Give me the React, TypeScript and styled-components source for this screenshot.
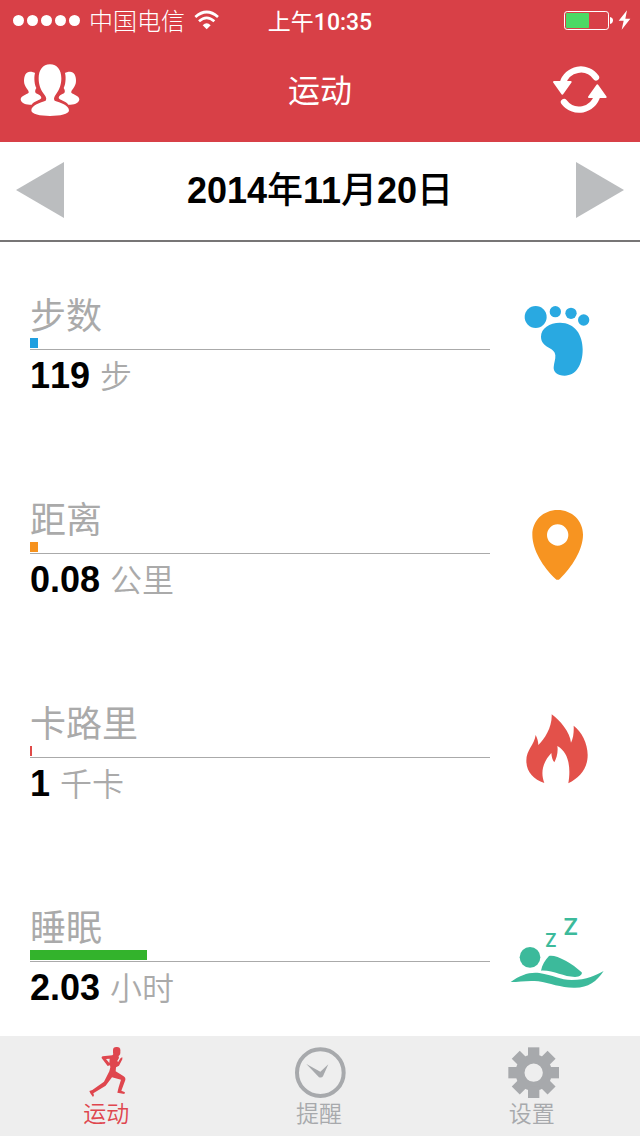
import React from 'react';
import styled, { createGlobalStyle } from 'styled-components';

const cjk = '"Noto Sans CJK SC", sans-serif';

const GlobalStyle = createGlobalStyle`
  *, *::before, *::after { box-sizing: border-box; }
  body {
    margin: 0;
    background: #fff;
    font-family: "Liberation Sans", ${cjk};
  }
  button { border: 0; padding: 0; background: none; cursor: pointer; }
  svg { display: block; flex: none; }
`;

const Screen = styled.div`
  display: flex;
  flex-direction: column;
  min-height: 100vh;
`;

const Header = styled.header`
  background: #d84047;
  color: #fff;
`;

const StatusBar = styled.div`
  display: grid;
  grid-template-columns: 1fr auto 1fr;
  align-items: center;
  height: 40px;
  padding: 0 8px;
  line-height: 40px;
`;

const StatusLeft = styled.div`
  display: flex;
  align-items: center;
  gap: 9px;
  padding-left: 5px;
`;

const Signal = styled.div`
  display: flex;
  gap: 3px;
`;

const Dot = styled.span`
  width: 11px;
  height: 11px;
  border-radius: 50%;
  background: #fff;
`;

const Carrier = styled.span`
  font-family: ${cjk};
  font-size: 24px;
  font-weight: 300;
`;

const Clock = styled.time`
  display: flex;
  align-items: baseline;
  font-family: ${cjk};
  font-size: 23px;
  font-weight: 400;
`;

const ClockDigits = styled.span`
  font-family: Roboto, sans-serif;
  font-weight: 500;
  line-height: 1;
`;

const StatusRight = styled.div`
  display: flex;
  justify-content: flex-end;
`;

const NavBar = styled.div`
  display: grid;
  grid-template-columns: 1fr auto 1fr;
  align-items: start;
  padding: 24px 20px;
`;

const NavButton = styled.button<{ $end?: boolean }>`
  justify-self: ${(p) => (p.$end ? 'end' : 'start')};
  color: #fff;
`;

const Title = styled.h1`
  margin: 0;
  font-family: ${cjk};
  font-size: 32px;
  font-weight: 400;
  line-height: 48px;
`;

const DateBar = styled.div`
  display: flex;
  align-items: flex-start;
  justify-content: space-between;
  padding: 20px 16px 22px;
  border-bottom: 2px solid #777576;
`;

const DateButton = styled.button`
  color: #bbbdbf;
`;

const DateText = styled.time`
  font-family: ${cjk};
  font-size: 36px;
  font-weight: 500;
  line-height: 50px;
  color: #000;
`;

const Digits = styled.b`
  font-family: "Liberation Sans", sans-serif;
  font-weight: 700;
  line-height: 1;
`;

const MetricList = styled.ul`
  display: flex;
  flex: 1;
  flex-direction: column;
  gap: 96px;
  margin: 0;
  padding: 50px 32px 24px 30px;
  list-style: none;
`;

const MetricRow = styled.li`
  display: flex;
  gap: 18px;
  height: 108px;
`;

const MetricBody = styled.div`
  flex: 1;
`;

const MetricName = styled.h2`
  margin: 0 0 4px;
  font-family: ${cjk};
  font-size: 36px;
  font-weight: 400;
  line-height: 42px;
  color: #aaa;
`;

const Track = styled.div`
  height: 12px;
  border-bottom: 1px solid #aaa;
`;

const Fill = styled.div<{ $color: string }>`
  height: 10px;
  background: ${(p) => p.$color};
`;

const Reading = styled.p`
  display: flex;
  align-items: baseline;
  gap: 10px;
  margin: 0;
  font-size: 36px;
  font-kerning: none;
  line-height: 48px;
`;

const Unit = styled.span`
  font-family: ${cjk};
  font-size: 32px;
  font-weight: 350;
  color: #aaa;
`;

const TabBar = styled.nav`
  display: flex;
  padding-right: 2px;
  background: #eee;
`;

const Tab = styled.a<{ $active?: boolean }>`
  display: flex;
  flex: 1;
  flex-direction: column;
  align-items: center;
  padding: 10px 0 12px;
  color: ${(p) => (p.$active ? '#df464e' : '#a7a9ac')};
  font-family: ${cjk};
  font-size: 23px;
  font-weight: 350;
  line-height: 24px;
  text-decoration: none;
`;

const SleepLetter = styled.text`
  font-family: Inter, sans-serif;
  font-weight: 600;
`;

const WifiIcon = () => (
  <svg width="26" height="20" viewBox="582 30 78 60" fill="none" stroke="#fff" strokeWidth="8" aria-hidden="true">
    <path d="M586 51 Q620 21 654 51" />
    <path d="M597 64 Q620 43 643 64" />
    <path d="M608 76 Q620 64 632 76 L620 88Z" fill="#fff" stroke="none" />
  </svg>
);

const BatteryIcon = () => (
  <svg width="68" height="20" viewBox="732 30 204 60" role="img" aria-label="电池充电中">
    <rect x="733.5" y="34.5" width="132" height="54" rx="8" fill="none" stroke="#fff" strokeWidth="3" />
    <rect x="738" y="39" width="69" height="45" rx="2" fill="#4cd964" />
    <path d="M870 51 Q879 53 879 61 Q879 70 870 72Z" fill="#fff" />
    <path d="M921 31 L896 62 L911 62 L905 89 L931 56 L916 56Z" fill="#fff" />
  </svg>
);

const sidePerson =
  'M90 215 C97 215 102 217 105 219 C101 234 104 256 109 264 C105 270 104 276 108 280 C117 284 124 288 124 294 C121 301 103 302 95 314 C75 316 62 308 62 298 C62 287 80 284 86 278 C88 270 72 262 72 243 C72 226 78 215 90 215Z';

const PeopleIcon = () => (
  <svg width="60" height="54" viewBox="60 192 180 162" fill="currentColor" aria-hidden="true">
    <path d="M150 193 C172 193 184 210 184 235 C184 255 178 268 170 280 C163 290 160 296 164 302 C180 308 207 315 207 331 C207 343 180 348 150 348 C120 348 94 343 94 331 C94 315 122 308 137 302 C141 296 138 290 130 280 C122 268 116 255 116 235 C116 210 128 193 150 193Z" />
    <path d={sidePerson} />
    <path d={sidePerson} transform="translate(300 0) scale(-1 1)" />
  </svg>
);

const SyncIcon = () => (
  <svg width="68" height="54" viewBox="696 192 204 162" fill="currentColor" stroke="currentColor" strokeLinejoin="round" strokeLinecap="round" aria-hidden="true">
    <path d="M728 250 A57 59 0 0 1 828 232" fill="none" strokeWidth="19" />
    <path d="M732 306 A57 59 0 0 0 832 286" fill="none" strokeWidth="19" />
    <path d="M702 246 L752 246 L727 281Z" strokeWidth="6" />
    <path d="M807 291 L857 291 L832 256Z" strokeWidth="6" />
  </svg>
);

const FootIcon = () => (
  <svg width="100" height="100" viewBox="24 6 300 300" fill="#29a9e1" aria-hidden="true">
    <circle cx="107" cy="81" r="33" />
    <circle cx="166" cy="65" r="17" />
    <circle cx="213" cy="70" r="17" />
    <circle cx="251" cy="90" r="17" />
    <path d="M180 98 C225 98 248 135 248 178 C248 225 228 257 194 257 C172 257 160 246 161 232 C162 218 167 208 166 196 C165 170 123 175 123 140 C123 115 148 98 180 98Z" />
  </svg>
);

const PinIcon = () => (
  <svg width="100" height="100" viewBox="24 3 300 300" fill="#f79421" aria-hidden="true">
    <path
      fillRule="evenodd"
      d="M173 45 C216 45 249 77 249 119 C249 165 215 217 180 251 Q173 258 166 251 C130 217 97 165 97 119 C97 77 130 45 173 45Z M173 88 A32 32 0 1 0 173 152 A32 32 0 1 0 173 88Z"
    />
  </svg>
);

const FlameIcon = () => (
  <svg width="100" height="100" viewBox="24 0 300 300" fill="#e3514a" aria-hidden="true">
    <path d="M155 43 C180 62 210 95 213 128 C220 115 222 95 221 77 C245 95 263 130 263 165 C263 205 240 232 205 250 C211 215 212 160 172 138 C175 155 170 175 163 187 C157 180 155 170 154 159 C130 185 120 215 133 249 C100 238 79 215 79 182 C79 150 103 135 107 105 C112 115 115 125 115 135 C135 115 157 80 155 43Z" />
  </svg>
);

const SleepIcon = () => (
  <svg width="100" height="100" viewBox="24 12 300 300" fill="#3cba9b" aria-hidden="true">
    <circle cx="90" cy="172" r="31" />
    <path d="M123 212 C126 195 135 180 147 168 C165 162 215 188 245 217 C248 222 240 231 225 231 C190 231 160 210 123 212Z" />
    <path d="M32 246 C60 225 90 215 118 219 C160 225 180 240 215 240 C260 240 290 225 311 213 C290 245 265 263 225 263 C185 264 150 250 115 244 C85 240 60 246 32 246Z" />
    <SleepLetter x="135" y="141" fontSize="54">Z</SleepLetter>
    <SleepLetter x="190" y="104" fontSize="69">Z</SleepLetter>
  </svg>
);

const RunnerIcon = () => (
  <svg width="54" height="54" viewBox="236 48 162 162" fill="currentColor" aria-hidden="true">
    <rect x="338" y="51" width="22" height="27" rx="10" />
    <path
      fillRule="evenodd"
      d="M340 72 L336 76 L307 79 C303 80 303 84 306 87 L322 108 L329 106 L330 112 L327 124 L311 155 L276 180 L267 183 L270 190 L278 201 L281 196 L279 190 L316 167 L335 142 L362 149 L355 172 L351 188 L372 192 L374 187 L363 182 L375 150 C376 145 374 142 370 139 L346 124 L347 112 L356 107 L366 88 L366 82 L361 84 L353 97 L351 92 L356 84 L354 74Z M317 87 L328 86 L327 99Z"
    />
  </svg>
);

const ReminderIcon = () => (
  <svg width="54" height="54" viewBox="877 48 162 162" fill="currentColor" aria-hidden="true">
    <circle cx="962" cy="128" r="70" fill="none" stroke="currentColor" strokeWidth="12" />
    <path d="M920 102 L962 125 L986 103 L970 139 Q967 144 958 142Z" />
  </svg>
);

const GearIcon = () => (
  <svg width="54" height="54" viewBox="556 48 162 162" fill="currentColor" aria-hidden="true">
    <circle cx="642" cy="128" r="41" fill="none" stroke="currentColor" strokeWidth="27" />
    {[0, 45, 90, 135, 180, 225, 270, 315].map((angle) => (
      <rect key={angle} x="625" y="52" width="34" height="34" transform={`rotate(${angle} 642 128)`} />
    ))}
  </svg>
);

const metrics = [
  { name: '步数', value: '119', unit: '步', percent: 1.8, color: '#209fe0', Icon: FootIcon },
  { name: '距离', value: '0.08', unit: '公里', percent: 1.8, color: '#f6921e', Icon: PinIcon },
  { name: '卡路里', value: '1', unit: '千卡', percent: 0.5, color: '#e04a48', Icon: FlameIcon },
  { name: '睡眠', value: '2.03', unit: '小时', percent: 25.4, color: '#33b32c', Icon: SleepIcon },
];

const tabs = [
  { name: '运动', href: '#activity', Icon: RunnerIcon },
  { name: '提醒', href: '#reminders', Icon: ReminderIcon },
  { name: '设置', href: '#settings', Icon: GearIcon },
];

export default function App() {
  return (
    <Screen>
      <GlobalStyle />
      <Header>
        <StatusBar>
          <StatusLeft>
            <Signal>
              {[1, 2, 3, 4, 5].map((n) => (
                <Dot key={n} />
              ))}
            </Signal>
            <Carrier>中国电信</Carrier>
            <WifiIcon />
          </StatusLeft>
          <Clock>
            上午<ClockDigits>10:35</ClockDigits>
          </Clock>
          <StatusRight>
            <BatteryIcon />
          </StatusRight>
        </StatusBar>
        <NavBar>
          <NavButton type="button" aria-label="好友">
            <PeopleIcon />
          </NavButton>
          <Title>运动</Title>
          <NavButton type="button" aria-label="同步" $end>
            <SyncIcon />
          </NavButton>
        </NavBar>
      </Header>
      <DateBar>
        <DateButton type="button" aria-label="前一天">
          <svg width="48" height="56" viewBox="0 0 48 56" fill="currentColor" aria-hidden="true">
            <path d="M48 0 V56 L0 28Z" />
          </svg>
        </DateButton>
        <DateText dateTime="2014-11-20">
          <Digits>2014</Digits>年<Digits>11</Digits>月<Digits>20</Digits>日
        </DateText>
        <DateButton type="button" aria-label="后一天">
          <svg width="48" height="56" viewBox="0 0 48 56" fill="currentColor" aria-hidden="true">
            <path d="M0 0 V56 L48 28Z" />
          </svg>
        </DateButton>
      </DateBar>
      <MetricList>
        {metrics.map(({ name, value, unit, percent, color, Icon }) => (
          <MetricRow key={name}>
            <MetricBody>
              <MetricName>{name}</MetricName>
              <Track role="progressbar" aria-label={name} aria-valuenow={percent}>
                <Fill $color={color} style={{ width: `${percent}%` }} />
              </Track>
              <Reading>
                <Digits>{value}</Digits>
                <Unit>{unit}</Unit>
              </Reading>
            </MetricBody>
            <Icon />
          </MetricRow>
        ))}
      </MetricList>
      <TabBar>
        {tabs.map(({ name, href, Icon }, index) => (
          <Tab key={name} href={href} $active={index === 0} aria-current={index === 0 ? 'page' : undefined}>
            <Icon />
            {name}
          </Tab>
        ))}
      </TabBar>
    </Screen>
  );
}
